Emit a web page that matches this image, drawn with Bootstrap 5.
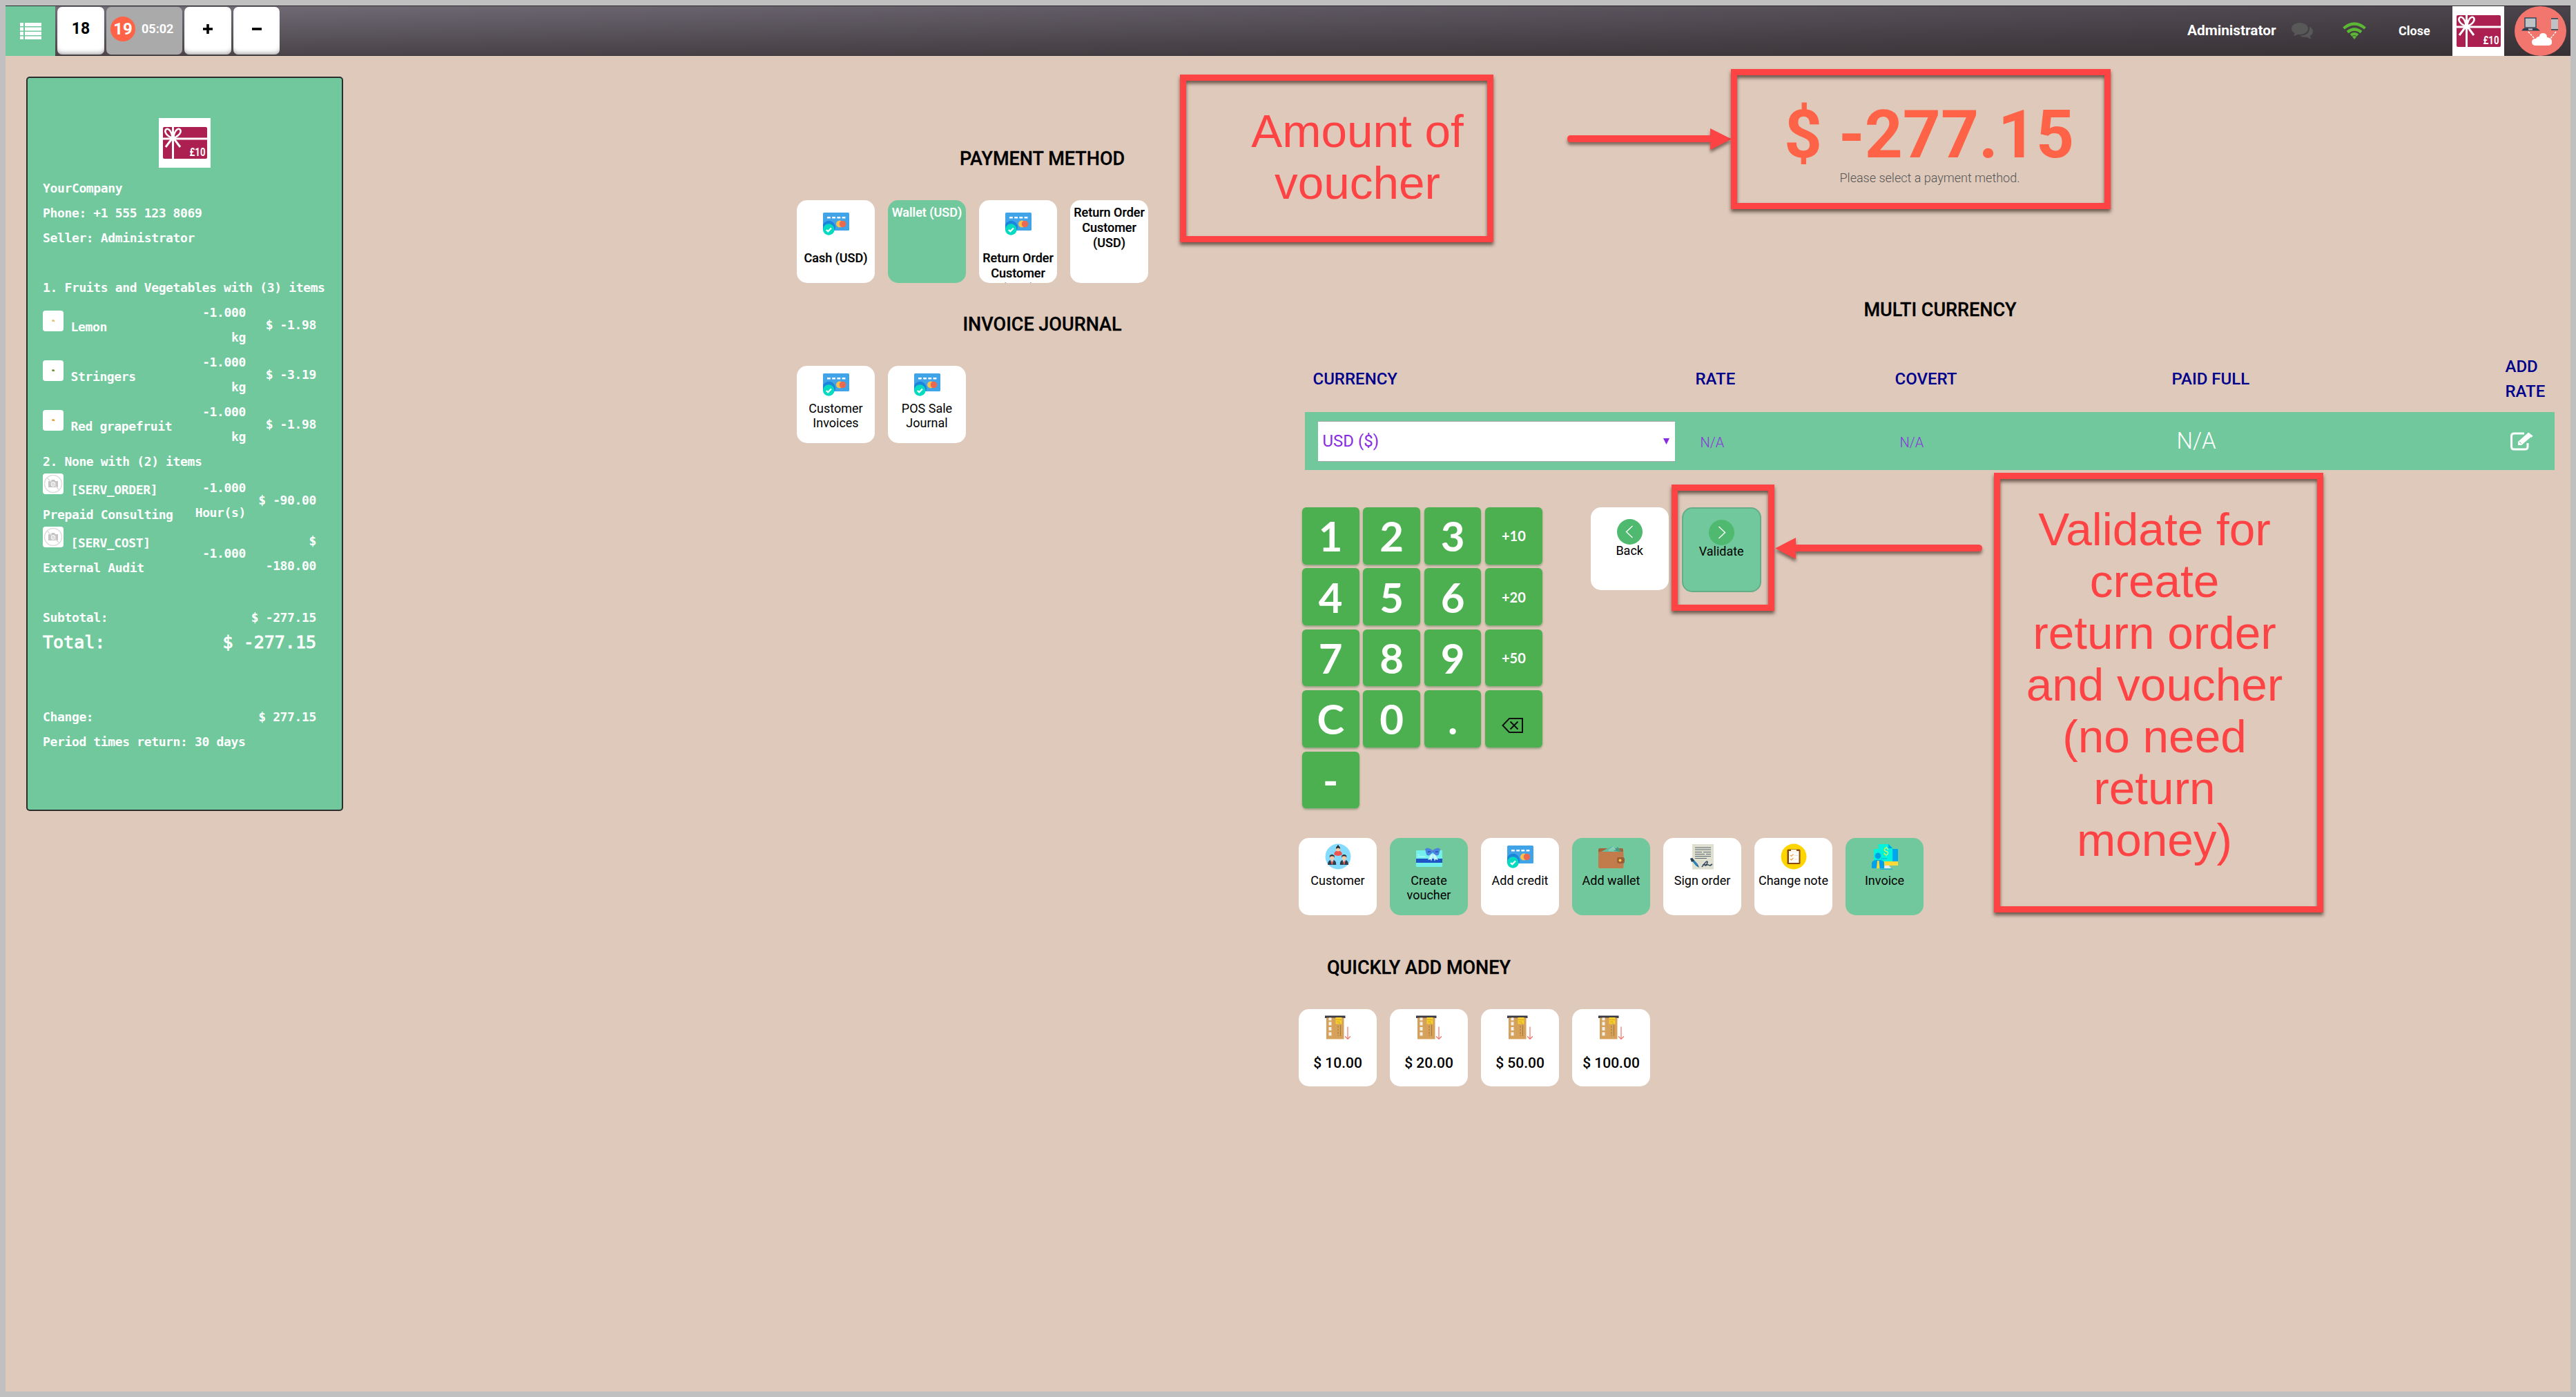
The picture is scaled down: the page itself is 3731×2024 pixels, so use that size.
<!DOCTYPE html>
<html lang="en">
<head>
<meta charset="utf-8">
<title>Point of Sale - Payment</title>
<link href="https://cdn.jsdelivr.net/npm/bootstrap@5.3.0/dist/css/bootstrap.min.css" rel="stylesheet">
<style>
:root{--pos-green:#70c89c;--pos-sand:#dfc9bb;--pos-red:#fe4344}
body{margin:0;background:#c0c0c0;width:3731px;height:2024px;padding:8px;overflow:hidden;font-family:Roboto,"Liberation Sans",sans-serif;color:#000;font-size:18px;position:relative}
svg{display:block}
.app{background:var(--pos-sand);height:2008px}
.topbar{height:73px;border-top:1px solid #2d2a2e;border-bottom:1px solid #3a3338;background:linear-gradient(to right,rgba(35,28,32,0),rgba(35,28,32,.52)),linear-gradient(to bottom,#746e7a,#4d474c)}
.topbar .menu-btn{width:72px;height:72px;background:var(--pos-green)}
.tab{height:69px;background:#fff;border-radius:7px;font-weight:700;font-size:23px;margin-left:3px;padding-bottom:5px;box-shadow:inset 0 -5px 6px -3px rgba(0,0,0,.35)}
.tab.current{background:#aaa;color:#fff;box-shadow:none}
.bubble{width:36px;height:36px;border-radius:50%;background:#ff6347;font-size:24px;margin:0 9px 0 6px}
.clock{font-size:18px;padding-bottom:2px}
.top-text{color:#fff;font-weight:700;white-space:nowrap}
.receipt{width:459px;height:1064px;margin:30px 0 0 30px;background:var(--pos-green);border:2px solid #2d2d2d;border-radius:5px;padding:58px 37px 0 22px;color:#fff;font:700 18px/36px "DejaVu Sans Mono","Liberation Mono",monospace;letter-spacing:-.36px}
.receipt .logo{margin:0 0 11.500px 168px;width:75px}
.line-item{height:72px;margin:0}
.line-item.tall{height:77px}
.line-item .nm{width:192px;line-height:36px}
.line-item .qt{width:102px}
.thumb{width:30px;height:30px;display:inline-block;vertical-align:baseline}
.grand{font-weight:400;font-size:25px;letter-spacing:0;-webkit-text-stroke:.9px #fff}
.mid{width:711px;margin-left:657px;padding-top:131px}
.sec-title{font-size:27px;line-height:36px;font-weight:500;margin:0;text-align:center;-webkit-text-stroke:.3px #000}
.tile{width:113px;height:112px;border-radius:15px;background:#fff;overflow:hidden;text-align:center;line-height:21px;padding-top:8px}
.tile.on{background:var(--pos-green)}
.tile svg{margin:0 auto 5px}
.tile.pay{height:120px;line-height:22px;font-weight:500;padding:7px 2px 0;-webkit-text-stroke:.2px}
.tile.pay svg{margin:8px auto 20px}
.tile.money{font-size:21px;font-weight:500;line-height:24px}
.tile.money svg{margin-bottom:20px}
.tiles{gap:19px}
.right{width:1858px;padding-top:66px}
.amount{font-size:96px;line-height:96px;font-weight:700;color:#ff6347}
.hint{line-height:24px;font-weight:300;color:#555;margin-top:3px;padding-left:2px}
.cur-grid{display:grid;grid-template-columns:554px 289px 401px 483px 83px;width:1810px;margin-left:25px}
.cur-head{height:72px;margin-top:46px;font-size:24px;line-height:36px;font-weight:500;color:#00008b}
.cur-head>div{padding-left:11.500px}
.cur-row{height:84px;margin-top:12px;background:var(--pos-green);color:#8a35dd;font-weight:300;font-size:20px}
.cur-row>div{padding-left:18.500px}
.cur-select{width:517px;height:59px;background:#fff;border:1px solid #aaa;border-width:1px 0;color:#8a2be2;font-size:24px;padding:0 8px 0 7px;font-weight:400}
.keypad{display:grid;grid-template-columns:repeat(4,82.5px);grid-auto-rows:82.5px;gap:5.9px;font-family:Lato,sans-serif;font-weight:700}
.key{background:#4caf50;color:#fff;border-radius:6px;font-size:60px;line-height:1;box-shadow:0 2px 3px rgba(60,110,60,.45)}
.key.sm{font-size:20px}
.key.erase{padding:20px 3px 0 0}
.nav-tile{height:120px;padding-top:17px}
.nav-tile svg{margin-bottom:-2px}
.nav-tile.go{width:115px;height:123px;border:2px solid #64ad87;padding-top:16px;background:var(--pos-green)}
.callout{position:absolute;border:9px solid var(--pos-red);box-shadow:0 4px 5px rgba(60,40,30,.7),inset 0 4px 5px rgba(60,40,30,.7);color:var(--pos-red);font:400 67.5px/75px "Liberation Sans",Arial,sans-serif;text-align:center;white-space:nowrap}
.pointer{position:absolute;filter:drop-shadow(0 4px 2px rgba(60,40,30,.6))}
</style>
<script src="https://cdn.jsdelivr.net/npm/bootstrap@5.3.0/dist/js/bootstrap.bundle.min.js"></script>
</head>
<body>
<svg class="d-none">
  <symbol id="gift" viewBox="0 0 75 72" preserveAspectRatio="none">
    <path fill="#fff" d="M0 0h75v72H0z"/><rect x="6" y="13" width="64" height="46" rx="2" fill="#ab2051"/>
    <path stroke="#fff" stroke-width="3" d="M20.500 12v48M5 30h66"/>
    <g fill="none" stroke="#fff" stroke-width="2.600"><path d="M20 29C11 26 8 20 10 17s8-1 10 12zM21 29c9-3 12-9 10-12s-8-1-10 12z"/><path stroke-width="3" d="M19 30L10 42M22 30l9 12"/></g>
    <circle cx="20.500" cy="29" r="3.500" fill="#fff"/>
    <text x="44.500" y="55" textLength="23" lengthAdjust="spacingAndGlyphs" font-family="Roboto" font-weight="700" font-size="16" letter-spacing="0" fill="#fff">£10</text>
  </symbol>
  <symbol id="card" viewBox="0 0 38 38">
    <rect y="3" width="38" height="26" rx="1.500" fill="#41a3e8"/><path d="M0 20a9 9 0 0 1 17 9H0z" fill="#1c84dd"/>
    <path stroke="#fff" stroke-width="2.400" stroke-dasharray="4.800 2.400" d="M6 10.200h27"/>
    <circle cx="24" cy="19.500" r="5" fill="#f9c04f"/><circle cx="28.500" cy="19.500" r="4.800" fill="#e96a50"/>
    <circle cx="8.300" cy="27.500" r="8.300" fill="#06dbc1"/><path d="M4.800 28l2.500 2.300 4.700-4.800" stroke="#fff" stroke-width="2.200" fill="none"/>
  </symbol>
  <symbol id="man" viewBox="0 0 12 15"><path d="M0 15q0-6 4-6.500h4q4 .5 4 6.500z" fill="#2c3e50"/><path d="M4 8.500h4L6 15z" fill="#fff"/><path d="M5.300 9.500h1.400l.5 4.500h-2.400z" fill="#e8503f"/><circle cx="6" cy="5" r="3" fill="#f7c9a0"/><path d="M2.700 5V2q3.300-3 6.600 0v3L8 3H4z" fill="#2b2b2b"/></symbol>
  <symbol id="people" viewBox="0 0 38 38">
    <circle cx="19" cy="19" r="18.500" fill="#84dbff"/><path d="M13 16q1-5 4-5h4q3 0 4 5-6 4-12 0z" fill="#f0544f"/><circle cx="19" cy="8.500" r="3" fill="#f7c9a0"/><path d="M16 8q0-4 2-4V2.500h2V4q2 0 2 4-3-3-6 0z" fill="#2b2b2b"/>
    <use href="#man" x="4" y="15.500" width="12.500" height="15.500"/><use href="#man" x="21.500" y="15.500" width="12.500" height="15.500"/>
  </symbol>
  <symbol id="voucher" viewBox="0 0 38 38">
    <rect y="10" width="38" height="24" rx="1" fill="#73f0ec"/><path d="M0 22h38v6H0z" fill="#1f55c4"/><path d="M2 19h12M2 16.500h3" stroke="#bafcf9"/>
    <path d="M22 15l-5 9 4-1 1 3 3-10zM27 15l5 9-4-1-1 3-3-10z" fill="#c7f6fb"/>
    <path d="M24 13q-6 7-9 3l-2-8q3-3 8 0l3 2 3-2q5-3 8 0l-2 8q-3 4-9-3z" fill="#4a84de"/><path d="M17 12h4M28 12h4" stroke="#2450ae" stroke-width="1.500"/>
  </symbol>
  <symbol id="wallet" viewBox="0 0 38 38">
    <rect y="7" width="36" height="8" rx="2" fill="#a76238"/><path d="M4 12l15-8 12 8z" fill="#62bd9f"/><path d="M14 11l8-7 5 8z" fill="#7bcdb4"/><path d="M22 11l6-6 5 7z" fill="#459c85"/><path d="M15 10l6-4 4 4" fill="none" stroke="#9ad8c4"/>
    <rect y="12" width="36.500" height="24" rx="2" fill="#c27c4c"/><rect x="27" y="20" width="11" height="9" rx="3" fill="#9d5c36"/><circle cx="31.500" cy="24.500" r="2" fill="#f6ca4d"/>
  </symbol>
  <symbol id="sign" viewBox="0 0 38 38">
    <path d="M4 1h31v36.500H4z" fill="#e0e0d1"/><path d="M8 6h23M8 9h23M8 12.500h10M20 12.500h11M8 15.500h14M24 15.500h7M8 18.500h23M8 21.500h17" stroke="#596570" stroke-width="1.200"/>
    <path d="M1 22l3-1 8 9-3 2z" fill="#2c80b8"/><path d="M1 22l3-1 3 4-4 2z" fill="#2c3e50"/><path d="M9 32l5 3-2-5z" fill="#1d6aa5"/>
    <path d="M18 34q8-11 8-7-1 5-3 5 0-3 7 0l3-2M19 31h9" stroke="#34495e" stroke-width="1.600" fill="none"/>
  </symbol>
  <symbol id="note" viewBox="0 0 38 38">
    <circle cx="19" cy="19" r="18.500" fill="#fed500"/><rect x="9.500" y="8.500" width="19" height="21.500" rx="1.500" fill="#8a4b12"/><path d="M12 11h14.500v17H12z" fill="#fff"/><path d="M15 9h8v4h-8z" fill="#fff3e6"/>
    <path d="M14 17l1.500 1.500 3-3M14 22.500l1.500 1.500 3-3" stroke="#fb9c3c" stroke-width="1.200" fill="none"/><path d="M20 17.500h5M20 23h5" stroke="#eee0d0"/>
  </symbol>
  <symbol id="invoice" viewBox="0 0 38 38">
    <path d="M3 8h10v17H3zM10 1h15l5 5v20H10z" fill="#00f3dc"/><path d="M24 1l6 6h-6z" fill="#009ee6"/><path d="M30 8h8v18h-8z" fill="#00a5ee"/><path d="M18 26h20v6H18z" fill="#fbd938"/>
    <path d="M19 32h6l3 4H15z" fill="#e4e8f4"/><path d="M12 37.200h18" stroke="#00a5ee"/><circle cx="9" cy="18" r="4.400" fill="#009ee6"/><path d="M0 36V28q3-5 9-4 7-1 9 4v8z" fill="#00a2ec"/><path d="M8 25h2.500l1 11H7z" fill="#fbd938"/>
    <text x="16" y="17" font-family="Roboto" font-size="15" fill="#d8f050">$</text><path d="M13 22h9" stroke="#00bccc"/>
  </symbol>
  <symbol id="atm" viewBox="0 0 38 38">
    <path d="M0 1.500h29.500v3.500H0z" fill="#3a3a45"/><path d="M2 4.500h25.500v31H2z" fill="#d6a25b"/><path d="M5.500 4.500h4v4h-4zM5.500 10.500h4v5h-4zM5.500 18h4v5h-4zM5.500 25.500h4v5h-4z" fill="#f0f0ee"/>
    <path d="M15.500 4h9v9.500h-9z" fill="#f5cf30"/><path d="M16 7.500h8M17 10.500h4v3" stroke="#d9ab1b" fill="none"/><path d="M19 16v15" stroke="#a57838" stroke-dasharray="3 1.500"/><path d="M22.500 15v16" stroke="#a57838"/>
    <path d="M33 17.500v18M29 31.500l4 4 4-4" stroke="#ef7468" stroke-width="1.200" fill="none"/>
  </symbol>
  <symbol id="nophoto" viewBox="0 0 30 30"><rect width="30" height="30" rx="4" fill="#fff"/><path d="M8 11h4l1-2h4l1 2h4v9H8z" fill="#c4c4c4"/><circle cx="15" cy="15.500" r="3" fill="#ddd" stroke="#fff"/><circle cx="15" cy="15" r="12.500" fill="none" stroke="#ddd" stroke-width="1.500"/><path d="M6 6l18 18" stroke="#ddd" stroke-width="1.500"/></symbol>
  <symbol id="fruit" viewBox="0 0 30 30"><rect width="30" height="30" rx="4" fill="#fff"/><path d="M13 15q0-2 2-2l2 1v2h-3z" fill="currentColor"/></symbol>
</svg>

<div class="app">
  <nav class="topbar d-flex align-items-center">
    <div class="menu-btn d-flex align-items-center justify-content-center flex-shrink-0">
      <svg width="31" height="24" fill="#fff"><path d="M0 0h5v5H0zM7 0h24v5H7zM0 6.500h5v5H0zM7 6.500h24v5H7zM0 13h5v5H0zM7 13h24v5H7zM0 19.500h5v4.500H0zM7 19.500h24v4.500H7z"/></svg>
    </div>
    <div class="tab d-flex align-items-center justify-content-center" style="width:68px">18</div>
    <div class="tab current d-flex align-items-center" style="width:110px"><span class="bubble d-flex align-items-center justify-content-center">19</span><span class="clock">05:02</span></div>
    <div class="tab d-flex align-items-center justify-content-center" style="width:68px"><svg width="14" height="14" stroke="#000" stroke-width="3.600"><path d="M0 7h14M7 0v14"/></svg></div>
    <div class="tab d-flex align-items-center justify-content-center" style="width:67px"><svg width="14" height="14" stroke="#000" stroke-width="3.600"><path d="M0 7h14"/></svg></div>
    <div class="ms-auto d-flex align-items-center h-100" style="padding-right:6px">
      <span class="top-text" style="font-size:20.8px;width:151px">Administrator</span>
      <svg width="31" height="24" viewBox="0 0 31 24" fill="#585858"><path d="M12 0c7 0 12 4 12 8.500S19 17 12 17q-1.500 0-3-.3Q6 19 2.500 19q1.800-1.500 2.200-3.800Q0 12.500 0 8.500C0 4 5 0 12 0z"/><path d="M26 5.500q5 3 5 7 0 4-4.500 6.500.5 2.500 2.500 4-4 0-7-2.500-6 1-10-2 13 0 14-10z"/></svg>
      <svg width="34" height="25" viewBox="0 0 34 25" style="margin-left:43px" fill="none" stroke="#5cb834" stroke-width="4.200"><path d="M1.500 9Q17-4 32.500 9M7 14.500q10-8 20 0M12 19q5-3.800 10 0"/><path d="M13.800 21q3.200-2 6.400 0L17 25z" fill="#5cb834" stroke="none"/></svg>
      <span class="top-text" style="font-size:18px;width:78px;margin-left:47px">Close</span>
      <svg width="75" height="72"><use href="#gift" width="75" height="72"/></svg>
      <svg width="75" height="72" viewBox="0 0 75 72" style="margin-left:15px"><ellipse cx="37.500" cy="36" rx="37.500" ry="36" fill="#f3766e"/><rect x="15" y="17" width="16" height="14" fill="#bdc3c7" stroke="#34495e" stroke-width="1.500"/><path d="M13 32h20l4 3.500H10z" fill="#2c3e50"/><path d="M20 32.500h6v2h-6z" fill="#ccc"/><rect x="53" y="17" width="10" height="18" rx="1" fill="#bdc3c7"/><path d="M53 18h10M53 34h10" stroke="#4a5560" stroke-width="2"/><path d="M20 37l9 10M60 37l-8 10" stroke="#fff" stroke-width="1.500" stroke-dasharray="3 1.500"/><path d="M31 57q-6 0-6-5t6-5q1-3 5-3 0-5 5.500-5t5.500 6q7 1 7 6 1 6-6 6z" fill="#fff"/></svg>
    </div>
  </nav>

  <main class="d-flex align-items-start">
    <section class="receipt flex-shrink-0">
      <svg class="logo" width="75" height="72"><use href="#gift" width="75" height="72"/></svg>
      <div>YourCompany</div>
      <div>Phone: +1 555 123 8069</div>
      <div>Seller: Administrator</div>
      <div class="text-nowrap" style="margin-top:36px">1. Fruits and Vegetables with (3) items</div>
      <div class="line-item d-flex align-items-center"><div class="nm"><svg class="thumb" style="color:#e3c66c"><use href="#fruit"/></svg> Lemon</div><div class="qt text-end">-1.000<br>kg</div><div class="ms-auto text-end">$ -1.98</div></div>
      <div class="line-item d-flex align-items-center"><div class="nm"><svg class="thumb" style="color:#71963a"><use href="#fruit"/></svg> Stringers</div><div class="qt text-end">-1.000<br>kg</div><div class="ms-auto text-end">$ -3.19</div></div>
      <div class="line-item d-flex align-items-center"><div class="nm text-nowrap"><svg class="thumb" style="color:#f0a030"><use href="#fruit"/></svg> Red grapefruit</div><div class="qt text-end">-1.000<br>kg</div><div class="ms-auto text-end">$ -1.98</div></div>
      <div>2. None with (2) items</div>
      <div class="line-item tall d-flex align-items-center"><div class="nm text-nowrap"><svg class="thumb"><use href="#nophoto"/></svg> [SERV_ORDER]<br>Prepaid Consulting</div><div class="qt text-end">-1.000<br>Hour(s)</div><div class="ms-auto text-end">$ -90.00</div></div>
      <div class="line-item tall d-flex align-items-center"><div class="nm text-nowrap"><svg class="thumb"><use href="#nophoto"/></svg> [SERV_COST]<br>External Audit</div><div class="qt text-end">-1.000</div><div class="ms-auto text-end">$<br>-180.00</div></div>
      <div class="d-flex justify-content-between" style="margin-top:36px"><span>Subtotal:</span><span>$ -277.15</span></div>
      <div class="d-flex justify-content-between grand"><span>Total:</span><span>$ -277.15</span></div>
      <div class="d-flex justify-content-between" style="margin-top:72px"><span>Change:</span><span>$ 277.15</span></div>
      <div>Period times return: 30 days</div>
    </section>

    <section class="mid flex-shrink-0">
      <h2 class="sec-title">PAYMENT METHOD</h2>
      <div class="tiles d-flex" style="margin:42px 0">
        <div class="tile pay"><svg width="38" height="38"><use href="#card"/></svg>Cash (USD)</div>
        <div class="tile pay on text-white">Wallet (USD)</div>
        <div class="tile pay"><svg width="38" height="38"><use href="#card"/></svg>Return Order Customer (USD)</div>
        <div class="tile pay">Return Order Customer (USD)</div>
      </div>
      <h2 class="sec-title">INVOICE JOURNAL</h2>
      <div class="tiles d-flex" style="margin-top:42px">
        <div class="tile"><svg width="38" height="38"><use href="#card"/></svg>Customer<br>Invoices</div>
        <div class="tile"><svg width="38" height="38"><use href="#card"/></svg>POS Sale<br>Journal</div>
      </div>
    </section>

    <section class="right flex-shrink-0">
      <div class="text-center">
        <div class="amount">$ -277.15</div>
        <div class="hint">Please select a payment method.</div>
      </div>
      <h2 class="sec-title" style="margin-top:161px;padding-left:32px">MULTI CURRENCY</h2>
      <div class="cur-grid cur-head align-items-center"><div>CURRENCY</div><div>RATE</div><div>COVERT</div><div>PAID FULL</div><div>ADD<br>RATE</div></div>
      <div class="cur-grid cur-row align-items-center">
        <div><div class="cur-select d-flex align-items-center justify-content-between"><span>USD ($)</span><svg width="9" height="9" fill="#8a2be2"><path d="M0 0h9L4.500 9z"/></svg></div></div>
        <div class="pt-1">N/A</div><div class="pt-1">N/A</div><div class="text-white" style="font-size:33px">N/A</div>
        <div><svg width="33" height="27" viewBox="0 0 33 27" fill="none" stroke="#fff" stroke-width="3"><path d="M25 16v5q0 4-4 4H5.500q-4 0-4-4V6q0-4 4-4H20"/><path d="M11 19v-5L25 1.500l5.500 5L16 19z" fill="#fff" stroke="none"/><path d="M13 14l3 3M26 2l5 4" stroke="#70c89c" stroke-width="1"/><path d="M26 .5l6.500 5-2 2.500-6-5.500z" fill="#fff" stroke="none"/></svg></div>
      </div>
      <div class="d-flex" style="margin:54px 0 0 21px;height:437px">
        <div class="keypad">
          <div class="key d-flex align-items-center justify-content-center">1</div><div class="key d-flex align-items-center justify-content-center">2</div><div class="key d-flex align-items-center justify-content-center">3</div><div class="key sm d-flex align-items-center justify-content-center">+10</div>
          <div class="key d-flex align-items-center justify-content-center">4</div><div class="key d-flex align-items-center justify-content-center">5</div><div class="key d-flex align-items-center justify-content-center">6</div><div class="key sm d-flex align-items-center justify-content-center">+20</div>
          <div class="key d-flex align-items-center justify-content-center">7</div><div class="key d-flex align-items-center justify-content-center">8</div><div class="key d-flex align-items-center justify-content-center">9</div><div class="key sm d-flex align-items-center justify-content-center">+50</div>
          <div class="key d-flex align-items-center justify-content-center">C</div><div class="key d-flex align-items-center justify-content-center">0</div><div class="key d-flex align-items-center justify-content-center">.</div><div class="key erase d-flex align-items-center justify-content-center"><svg width="32" height="22" viewBox="0 0 32 22" fill="none" stroke="#111" stroke-width="2"><path d="M11 1h19v20H11L1.500 11zM12.500 5.500l11 11M23.500 5.500l-11 11"/></svg></div>
          <div class="key d-flex align-items-center justify-content-center">-</div>
        </div>
        <div class="d-flex" style="margin-left:70px;gap:19px">
          <div class="tile nav-tile"><svg width="37" height="37"><circle cx="18.500" cy="18.500" r="18.500" fill="#4fba6f"/><path d="M22.500 10l-9 8.500 9 8.500" fill="none" stroke="#fff" stroke-width="1.400"/></svg>Back</div>
          <div class="tile nav-tile go"><svg width="37" height="37"><circle cx="18.500" cy="18.500" r="18.500" fill="#4fba6f"/><path d="M14.500 10l9 8.500-9 8.500" fill="none" stroke="#fff" stroke-width="1.400"/></svg>Validate</div>
        </div>
      </div>
      <div class="tiles d-flex" style="margin:42px 0 0 16px">
        <div class="tile"><svg width="38" height="38"><use href="#people"/></svg>Customer</div>
        <div class="tile on"><svg width="38" height="38"><use href="#voucher"/></svg>Create<br>voucher</div>
        <div class="tile"><svg width="38" height="38"><use href="#card"/></svg>Add credit</div>
        <div class="tile on"><svg width="38" height="38"><use href="#wallet"/></svg>Add wallet</div>
        <div class="tile"><svg width="38" height="38"><use href="#sign"/></svg>Sign order</div>
        <div class="tile text-nowrap"><svg width="38" height="38"><use href="#note"/></svg>Change note</div>
        <div class="tile on"><svg width="38" height="38"><use href="#invoice"/></svg>Invoice</div>
      </div>
      <h2 class="sec-title text-start" style="margin:58px 0 42px 57px">QUICKLY ADD MONEY</h2>
      <div class="tiles d-flex" style="margin-left:16px">
        <div class="tile money"><svg width="38" height="38"><use href="#atm"/></svg>$ 10.00</div>
        <div class="tile money"><svg width="38" height="38"><use href="#atm"/></svg>$ 20.00</div>
        <div class="tile money"><svg width="38" height="38"><use href="#atm"/></svg>$ 50.00</div>
        <div class="tile money"><svg width="38" height="38"><use href="#atm"/></svg>$ 100.00</div>
      </div>
    </section>
  </main>
</div>

<!-- Tutorial annotations laid over the payment screen -->
<div class="callout" style="left:1709px;top:108px;width:454px;height:243px;padding:35px 0 0 60px">Amount of<br>voucher</div>
<svg class="pointer" style="left:2270px;top:186px" width="238" height="31" fill="#fe4344"><path d="M5 10h202V0l31 15.500L207 31V20H5q-5 0-5-5t5-5z"/></svg>
<div class="callout" style="left:2507px;top:100px;width:550px;height:203px"></div>
<div class="callout" style="left:2421px;top:702px;width:149px;height:183px"></div>
<svg class="pointer" style="left:2571px;top:779px" width="300" height="31" fill="#fe4344"><path d="M294 10H30V0L0 15.500 30 31V20h264q6 0 6-5t-6-5z"/></svg>
<div class="callout" style="left:2888px;top:685px;width:477px;height:637px;padding:35px 12px 0 0">Validate for<br>create<br>return order<br>and voucher<br>(no need<br>return<br>money)</div>
</body>
</html>
